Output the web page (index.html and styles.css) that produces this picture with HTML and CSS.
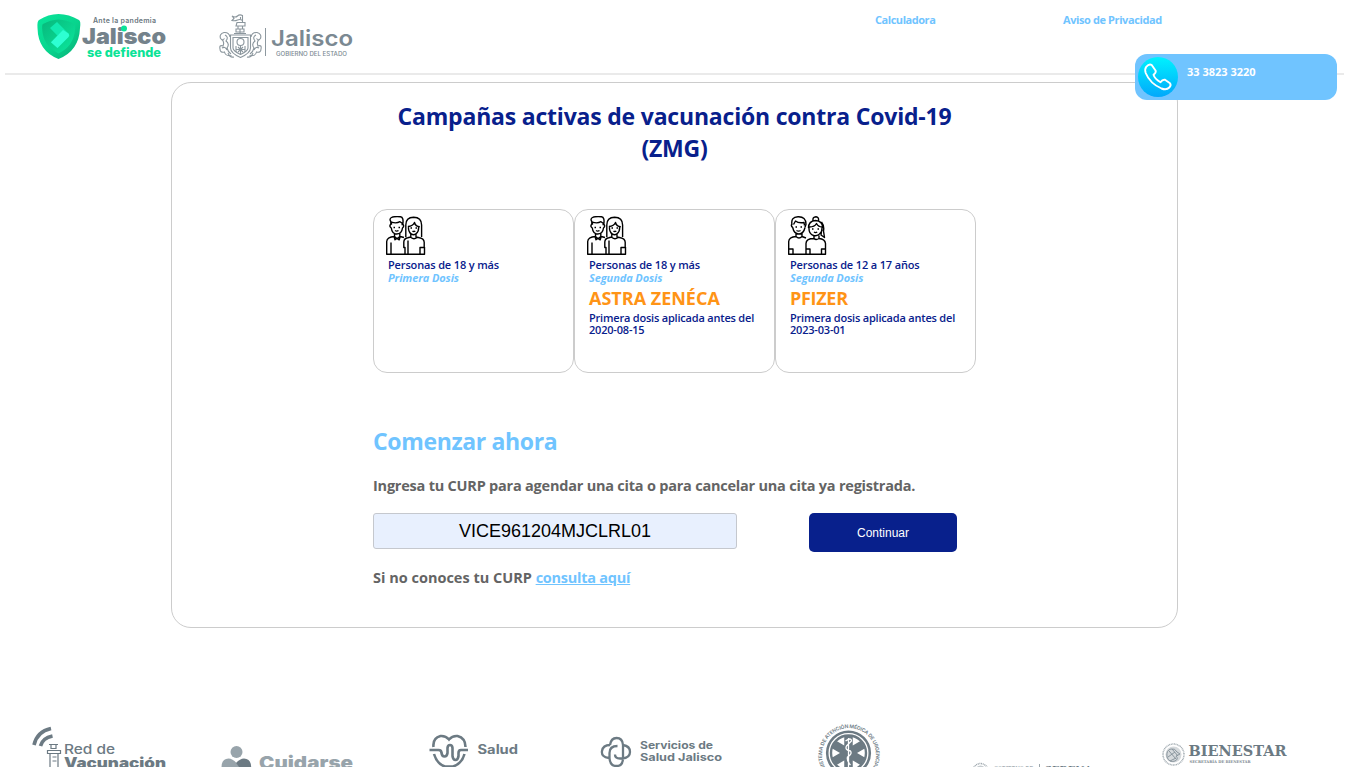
FILE: index.html
```html
<!DOCTYPE html>
<html lang="es">
<head>
<meta charset="utf-8">
<title>Vacunación Jalisco</title>
<link rel="stylesheet" href="styles.css">
</head>
<body>
<svg class="defs" width="0" height="0" aria-hidden="true">
  <defs>
    <symbol id="woman" viewBox="0 0 40 40">
      <path d="M19.800 21V9q0-7.500 7.800-7.700 8 .2 8 7.700v12M19 39V31.500h-1.200V26q.2-3.500 4-4.200l3-.8v-3M30 18v3l3.500.8q4.500.8 4.700 4.500v5.200H34v7.300M22 24.500V39M18 38.300h20.500V31M22.500 10q-.5 6 3 8.200 2 1.200 4 0 3.800-2.500 3-8.200M22 10.500q5-.5 6.500-4 1 4 5.300 4.200M26.500 15q1.200 1.200 2.800 0M24.500 12h1.500M29.500 12h1.500M25 21.500q3 2.500 6 0"/>
    </symbol>
    <symbol id="couple" viewBox="0 0 40 40">
      <path d="M4.800 9V5.500Q3 3 5.500 1.500 8 .2 14.500.7q3.500.5 2.200 8.300M4.500 8.500q-1.500 2 .8 3.500Q6 18 10.800 18q5-.2 5.700-6 2-1.700.5-3.500M5.500 8.500V6.200q5 1.500 8.500-.5l2.200 1.600v2M8.500 20.500Q1 21 .7 25.500V38.300H18M5 26.500V38M8.500 17v3.500l2.500 2.300 2.800-2.300V17M8 20.500l1 3.300 2-1.500 2.200 1.500 1-3.300 3.800 1M9 14.500q1.800 1.300 3.500 0M7.500 11.500H9M12.500 11.500H14"/>
      <use href="#woman" width="40" height="40"/>
    </symbol>
    <symbol id="teens" viewBox="0 0 40 40">
      <path d="M4 9Q2.500 1 10 .7q8-.2 8 7.500l-1 3M4 7.500q-1.500 2.500.7 4Q6 18 11 18q4.700-.5 6-6.500M5.500 8.500l2-3.500q3 2.500 8.500 1.500l.5 3M8 17.500v3q3 3 6 0v-3M8 20.500Q1 21 .7 25.500V38.300H18M.7 33H5v5M14 20.500l4 1.500M8.500 14.500q2 1.300 4 0M7.500 11H9M12.500 11H14"/>
      <path d="M20.500 12q0-7 7-7.500 7.300.5 7.300 7.500M25 4.500q-.5-3.500 3-3.800 3 .3 2.500 3.800M33.500 6q3 4 2 9l1 6.500-3.500-2.500 1-7M21 11q-.5 7 4.500 8.500 5 1.500 8.500-5v-3.500M21.500 11q5 0 7-3.500 2 3.500 5.500 3.500M26 19.500v3q2 2 5 0v-3M26 22.500q-8 0-8 5V38.300h19.500V27.500q-.5-4.500-6.500-5M18 33h4v5M37.500 33h-4v5M26 16q1.500 1.200 3.200 0M24 13h1.500M29.500 13H31"/>
    </symbol>
    <linearGradient id="phoneFill" x1="0" y1="0" x2="0" y2="1"><stop stop-color="#00f2fe"/><stop offset="1" stop-color="#02a8fb"/></linearGradient>
    <linearGradient id="shieldFill" x1="0" y1="0" x2="1" y2="1"><stop stop-color="#09e69b"/><stop offset=".55" stop-color="#08d48d"/><stop offset="1" stop-color="#08ad75"/></linearGradient>
    <linearGradient id="shieldInner" x1="0" y1="0" x2="1" y2="1"><stop stop-color="#07b87b"/><stop offset="1" stop-color="#0be99e"/></linearGradient>
  </defs>
</svg>

<header class="header">
  <svg class="logo" width="150" height="60" viewBox="30 5 150 60">
    <path d="M58.500 14Q69 14 79 20q2 1 1 8Q79 51 58.500 59 38 51 37.500 28q-.5-7 1.500-8 9-6 19.500-6z" fill="url(#shieldFill)"/>
    <path d="M58.500 19.500q8 .3 16 4.500 1 0 .6 5Q74 46 58.500 53.500 43 46 42.200 29q-.3-4.500.8-5 7.500-4.200 15.500-4.500z" fill="url(#shieldInner)"/>
    <path d="M50 28l7-6 11.500 11.500q1.500 1.700 0 3.400L57.500 48l-6.500-5.500 6.500-6.700z" fill="#12eab0"/>
    <path d="M51 42.300L63 30l5.500 3.500q1.500 1.700 0 3.400L57.500 48z" fill="#2effd2"/>
    <text class="f-logo" x="93" y="22.800" font-size="7" font-weight="600" fill="#6b7780" textLength="63">Ante la pandemia</text>
    <text class="f-logo" x="82" y="43.500" font-size="22" font-weight="900" fill="#74828b" textLength="84" lengthAdjust="spacingAndGlyphs">Jalisco</text>
    <circle cx="124" cy="28.500" r="3" fill="#0be397"/>
    <text class="f-logo" x="87" y="56.500" font-size="12.500" font-weight="800" fill="#0be397" textLength="74" lengthAdjust="spacingAndGlyphs">se defiende</text>
  </svg>
  <svg class="logo logo-state" width="150" height="60" viewBox="210 5 150 60">
    <g fill="none" stroke="#8b969d" stroke-width="1.100">
      <path d="M242.500 22V15.500q-3-1.500-5 .5t-5.500 0l2 2.500-2 2q3 .8 5.500-.5t5 .5M240.500 17v2M236 26h9v-3.500h-8zM236 29h8v3h-8zM234 33.500h12M238 26v3M242.500 26v3M240 29v4"/>
      <path d="M230.500 35h20v13q0 5-10 9.500-10-4.500-10-9.500zM233 37.500h15V48q0 3-7.500 6.500-7.500-3.500-7.500-6.500z"/>
      <circle cx="240.500" cy="42" r="3.500"/>
      <path d="M240.500 45.500V54M236 46v6M238 47l5 5M245 46v6M243 47l-5 5M236 49.500h9"/>
      <path d="M230 37q-1-5-6-4.500-5 1.500-3.500 6 2 2.500 4 0M221 39q4 2 2 7-4-1.500-3 3 0 4 4.500 3 1 4.500 7 3.500M225 35q4 2 1 6 4 3 1 7 1 4 4 6M222 48q3-2 5 2M234 57q-4 1-6-4M251 37q1-5 6-4.500 5 1.500 3.500 6-2 2.500-4 0M260 39q-4 2-2 7 4-1.500 3 3 0 4-4.500 3-1 4.500-7 3.500M256 35q-4 2-1 6-4 3-1 7-1 4-4 6M259 48q-3-2-5 2M247 57q4 1 6-4"/>
    </g>
    <path d="M265.500 28v28" stroke="#8d989f"/>
    <text class="f-logo" x="271" y="45.500" font-size="22" font-weight="600" fill="#7b8992" textLength="82" lengthAdjust="spacingAndGlyphs">Jalisco</text>
    <text class="f-logo" x="276" y="55.500" font-size="5.500" font-weight="500" fill="#7b8992" textLength="71" lengthAdjust="spacingAndGlyphs">GOBIERNO DEL ESTADO</text>
  </svg>
  <nav class="nav">
    <a class="nav-calc">Calculadora</a>
    <a class="nav-privacy">Aviso de Privacidad</a>
  </nav>
</header>

<aside class="phone">
  <svg width="40" height="40" viewBox="0 0 40 40">
    <circle cx="20" cy="20" r="20" fill="url(#phoneFill)"/>
    <path d="M8.200 9.800q3-3.500 5.500-1.800l4 5.800q.5 2-2.200 4 1.300 4.200 7 7.500 2-3 4.500-2.500l5 3.500q1.500 2-.7 4.200-2.800 3-7.800 1Q12 26.500 7.700 16q-1.200-4 .5-6.200z" fill="none" stroke="#fff" stroke-width="1.900" stroke-linejoin="round"/>
  </svg>
  <span class="phone-number">33 3823 3220</span>
</aside>

<main class="panel">
  <h1 class="title">Campañas activas de vacunación contra Covid-19<br>(ZMG)</h1>
  <section class="campaigns">
    <article class="campaign">
      <svg class="people" width="40" height="40"><use href="#couple"/></svg>
      <p class="who">Personas de 18 y más</p>
      <p class="dose">Primera Dosis</p>
    </article>
    <article class="campaign">
      <svg class="people" width="40" height="40"><use href="#couple"/></svg>
      <p class="who">Personas de 18 y más</p>
      <p class="dose">Segunda Dosis</p>
      <p class="vaccine">ASTRA ZENÉCA</p>
      <p class="note">Primera dosis aplicada antes del<br>2020-08-15</p>
    </article>
    <article class="campaign">
      <svg class="people" width="40" height="40"><use href="#teens"/></svg>
      <p class="who">Personas de 12 a 17 años</p>
      <p class="dose">Segunda Dosis</p>
      <p class="vaccine pfizer">PFIZER</p>
      <p class="note">Primera dosis aplicada antes del<br>2023-03-01</p>
    </article>
  </section>
  <section class="start">
    <h2 class="subtitle">Comenzar ahora</h2>
    <p class="hint">Ingresa tu CURP para agendar una cita o para cancelar una cita ya registrada.</p>
    <form class="form">
      <input class="curp" type="text" value="VICE961204MJCLRL01">
      <button class="submit" type="button">Continuar</button>
    </form>
    <p class="lookup">Si no conoces tu CURP <a class="link">consulta aquí</a></p>
  </section>
</main>

<footer class="footer">
  <svg viewBox="20 700 190 67">
    <g fill="none" stroke="#6c7a83">
      <path d="M34 745q3-13.500 17-16.500M40.500 746q2-8 12-10" stroke-width="3.600"/>
      <path d="M49 744.500h9M51 744.500v4h5v-4M47.500 750.500h13v3h-13zM50 753.500V767M58 753.500V767M52.500 757h4M52.500 761h4" stroke-width="1.200"/>
    </g>
    <text class="f-logo" x="64" y="754" font-size="13" font-weight="500" fill="#6c7a83" textLength="51" lengthAdjust="spacingAndGlyphs">Red de</text>
    <text class="f-logo" x="64" y="767.500" font-size="14" font-weight="900" fill="#6c7a83" textLength="102" lengthAdjust="spacingAndGlyphs">Vacunación</text>
  </svg>
  <svg viewBox="210 700 210 67">
    <circle cx="236.500" cy="752" r="6" fill="#98a4ab"/>
    <path d="M221.500 767q0-8 7-8.500 4 0 8 4.500l3 4z" fill="#98a4ab"/>
    <path d="M236 763q4-4.500 8-4.500 7 .5 7.200 8.500H239z" fill="#6c7a83"/>
    <text class="f-logo" x="259" y="768.500" font-size="17.500" font-weight="900" fill="#98a4ab" textLength="94" lengthAdjust="spacingAndGlyphs">Cuidarse</text>
  </svg>
  <svg viewBox="420 700 170 67">
    <path d="M433.500 747q-1-9 7-11 5-.5 8.500 3.500 3.500-4 8.500-3.500 8 2 8 11M429.500 750h9q3 0 3 3 .5 3.500 3 3.500t3-3.500v-5q.3-3 2.500-3t2.500 3v8q.5 4 3 4t3-4v-3q0-3 2.500-3h7M434 754q3 10 11 12.500h8q9-3 11.500-12.500" fill="none" stroke="#6c7a83" stroke-width="2.600"/>
    <text class="f-logo" x="477.500" y="754" font-size="12.500" font-weight="700" fill="#6c7a83" textLength="40.500" lengthAdjust="spacingAndGlyphs">Salud</text>
  </svg>
  <svg viewBox="590 700 210 67">
    <g fill="none" stroke="#6c7a83" stroke-width="2.300">
      <path d="M609 758q-8-1-7-7 1-6 8-6M610 745q1-7 6.500-7 6 0 6.500 7v13q0 8-6.500 8-6.500 0-7-8v-5q0-7 8-7M623 745q7 1 7 7t-8 6.500h-2q-5 0-5-4"/>
    </g>
    <text class="f-logo" x="640" y="749" font-size="10.500" font-weight="700" fill="#6c7a83" textLength="73" lengthAdjust="spacingAndGlyphs">Servicios de</text>
    <text class="f-logo" x="640" y="761" font-size="10.500" font-weight="700" fill="#6c7a83" textLength="82" lengthAdjust="spacingAndGlyphs">Salud Jalisco</text>
  </svg>
  <svg viewBox="800 700 160 67">
    <circle cx="848.500" cy="753" r="21.300" fill="none" stroke="#6c7a83" stroke-width="2.600"/>
    <circle cx="848.500" cy="753" r="17.500" fill="#fff" stroke="#6c7a83" stroke-width="2.400"/>
    <path d="M848.500 736v34M834 744.500l29 17M863 744.500l-29 17" stroke="#6c7a83" stroke-width="8.500"/>
    <path d="M848.500 738v29M845.500 741q6-4 6 0l-5 5q-2 4 4 5 2 3-3 6-1 4 3 8" fill="none" stroke="#fff" stroke-width="1.300"/>
    <path id="samuArc" d="M825.300 768A27 27 0 1 1 872.700 768" fill="none"/>
    <text class="f-logo" font-size="5" font-weight="600" fill="#6c7a83"><textPath href="#samuArc" textLength="112">SISTEMA DE ATENCIÓN MÉDICA DE URGENCIAS</textPath></text>
  </svg>
  <svg viewBox="960 700 190 67">
    <circle cx="980.500" cy="771" r="7.500" fill="none" stroke="#9ca6ac" stroke-width="1.500" stroke-dasharray="1 .7"/>
    <circle cx="980.500" cy="771" r="5.500" fill="#c5cbcf"/>
    <text class="f-serif" x="994" y="770.500" font-size="6.500" fill="#8d989f" textLength="39" lengthAdjust="spacingAndGlyphs">GOBIERNO DE</text>
    <path d="M1039.500 764v5" stroke="#9ca6ac"/>
    <text class="f-serif" x="1045" y="772.500" font-size="10" font-weight="700" fill="#6c7a83" textLength="47" lengthAdjust="spacingAndGlyphs">SEDENA</text>
  </svg>
  <svg viewBox="1150 700 190 67">
    <circle cx="1173.500" cy="754.500" r="10.500" fill="none" stroke="#a5aeb4" stroke-width="1.500" stroke-dasharray="1 .6"/>
    <circle cx="1173.500" cy="754.500" r="8" fill="#d5d9dc"/>
    <path d="M1167 757q-1-7 4-8 4-1 6 3l3 2-4 2q3 3-1 5-6 2-8-4zM1169 751l7 8M1172 749l6 7M1168 757l7-5M1170 761l6-3" fill="none" stroke="#89959d" stroke-width="1"/>
    <text class="f-serif" x="1188.500" y="756.300" font-size="15.500" font-weight="700" fill="#6c7a83" textLength="98" lengthAdjust="spacingAndGlyphs">BIENESTAR</text>
    <text class="f-serif" x="1189.500" y="763" font-size="3.800" font-weight="700" fill="#7d8991" textLength="61" lengthAdjust="spacingAndGlyphs">SECRETARÍA DE BIENESTAR</text>
  </svg>
</footer>
</body>
</html>
```
FILE: styles.css
```css
* { box-sizing: border-box; }
body { margin: 0; height: 767px; overflow: hidden; background: #fff; font-family: "Open Sans", "Noto Sans", sans-serif; font-weight: 700; display: flex; flex-direction: column; }
h1, h2, p { margin: 0; }
.defs { position: absolute; }
.f-logo { font-family: Inter, sans-serif; }
.f-serif { font-family: "DejaVu Serif", "Liberation Serif", serif; }

.header { height: 75px; flex: none; margin: 0 4px 0 5px; padding: 5px 0 0 25px; border-bottom: 2px solid #eaeaea; display: flex; align-items: flex-start; }
.logo { flex: none; }
.logo-state { margin-left: 30px; }
.nav { display: flex; padding: 7px 0 0 515px; font-size: 11px; line-height: 16px; color: #70c4ff; white-space: nowrap; }
.nav-calc { width: 188px; letter-spacing: -0.45px; }
.nav-privacy { letter-spacing: -0.4px; }

/* Floating call widget */
.phone { position: absolute; left: 1135px; top: 54px; width: 202px; height: 46px; padding: 3px; border-radius: 12px; background: #70c4ff; display: flex; }
.phone-number { margin-left: 9px; padding-top: 7px; font-size: 11px; line-height: 16px; color: #fff; }

.panel { flex: none; width: 1007px; height: 546px; margin: 7px 0 0 171px; padding: 17px 201px 0; border: 1px solid #ccc; border-radius: 20px; }
.title { font-size: 23px; line-height: 32px; text-align: center; color: #08208c; white-space: nowrap; letter-spacing: -0.2px; }
.campaigns { display: grid; grid-template-columns: repeat(3, 201px); margin-top: 45px; }
.campaign { height: 164px; padding: 6px 12px; border: 1px solid #ccc; border-radius: 14px; color: #08208c; font-size: 11px; line-height: 12px; white-space: nowrap; }
.people { display: block; fill: none; stroke: #000; stroke-width: 1.4; stroke-linejoin: round; }
.campaign p { margin-left: 2px; }
.who { padding-top: 2px; line-height: 13px; font-weight: 600; letter-spacing: -0.15px; }
.dose { line-height: 13px; font-style: italic; color: #70c4ff; letter-spacing: -0.1px; }
.vaccine { margin-top: 2px; font-size: 18px; line-height: 24px; color: #ff9416; }
.pfizer { letter-spacing: -0.3px; }
.note { padding-top: 2px; line-height: 12px; font-weight: 600; letter-spacing: -0.2px; }

.start { color: #646464; font-size: 14.5px; line-height: 20px; white-space: nowrap; }
.subtitle { margin-top: 52px; font-size: 23px; line-height: 32px; letter-spacing: -0.35px; color: #70c4ff; }
.hint { margin-top: 19px; letter-spacing: -0.22px; }
.form { display: flex; align-items: flex-start; justify-content: space-between; width: 584px; margin-top: 17px; }
.curp { width: 364px; height: 36px; border: 1px solid #c5c8ce; border-radius: 3px; padding: 0; background: #e8f0fe; color: #000; font: 18px "Liberation Sans", sans-serif; text-align: center; }
.submit { width: 148px; height: 39px; border: 0; border-radius: 5px; padding: 0; background: #08208c; color: #fff; font: 12px "Liberation Sans", sans-serif; }
.lookup { margin-top: 16px; letter-spacing: 0; }
.link { color: #70c4ff; text-decoration: underline; letter-spacing: -0.25px; }

.footer { flex: none; height: 67px; margin-top: 72px; padding-left: 20px; display: grid; grid-template-columns: 190px 210px 170px 210px 160px 190px 190px; }
.footer svg { display: block; width: 100%; height: 67px; }
```
